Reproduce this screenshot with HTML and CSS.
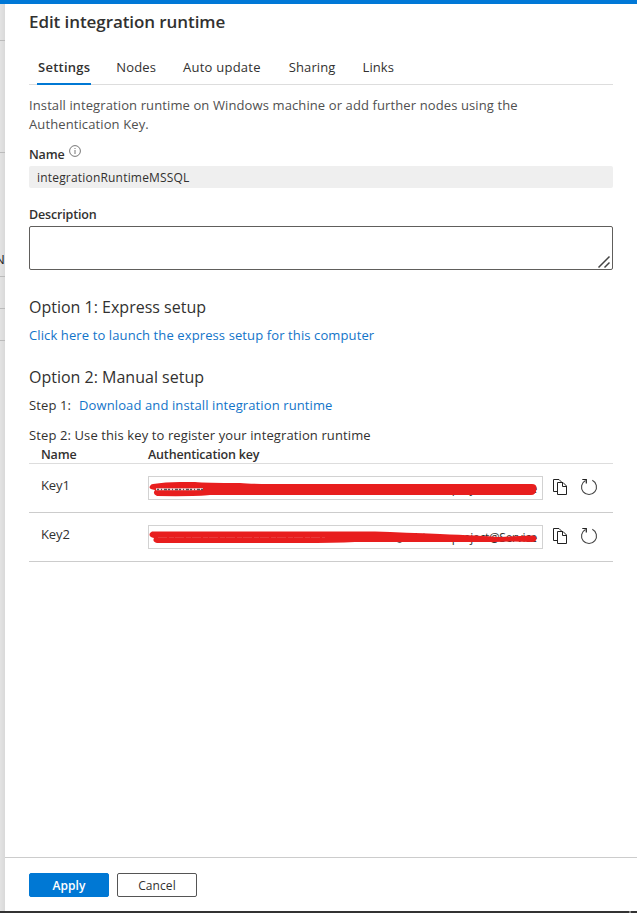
FILE: index.html
```html
<!DOCTYPE html>
<html lang="en">
<head>
<meta charset="utf-8">
<title>Edit integration runtime</title>
<link rel="stylesheet" href="styles.css">
</head>
<body>
<svg class="defs" width="0" height="0" aria-hidden="true">
  <symbol id="copy" viewBox="0 0 16 18">
    <path d="M5 13.5H1.5V1.500H7l2.500 2.500M5.500 4.500h5.500l3.500 3.500v8.500h-9zM10.500 4.500v4h4" fill="none" stroke="#222"/>
  </symbol>
  <symbol id="refresh" viewBox="0 0 18 18">
    <path d="M12.300 2.300A7.500 7.500 0 1 1 5.500 2.400" fill="none" stroke="#444" stroke-width="1.100"/>
    <path d="M2.300 1.500h4v4" fill="none" stroke="#222" stroke-width="1.200"/>
  </symbol>
</svg>
<div class="topbar"></div>
<div class="main">
  <aside class="backdrop"><i class="l1"></i><i class="l2"></i><span class="peek">N</span><i class="l3"></i><i class="l4"></i><i class="l5"></i></aside>
  <section class="panel">
    <div class="content">
      <h1>Edit integration runtime</h1>
      <nav class="tabs">
        <a class="tab active">Settings</a><a class="tab">Nodes</a><a class="tab auto">Auto update</a><a class="tab sharing">Sharing</a><a class="tab">Links</a>
      </nav>
      <p class="intro">Install integration runtime on Windows machine or add further nodes using the<br>Authentication Key.</p>
      <div class="label name-label"><span>Name</span>
        <svg width="12" height="12" viewBox="0 0 12 12"><circle cx="6" cy="6" r="5.400" fill="none" stroke="#666" stroke-width=".9"/><path d="M6 5v4M6 3v1" stroke="#777"/></svg>
      </div>
      <div class="name-field">integrationRuntimeMSSQL</div>
      <div class="label desc-label">Description</div>
      <div class="textarea"><svg width="14" height="14" viewBox="0 0 14 14"><path d="M1.500 12.500l11-11M7.500 12.500l5-5" stroke="#444" stroke-width="1.500"/></svg></div>
      <h2 class="opt1">Option 1: Express setup</h2>
      <p class="row express"><a>Click here to launch the express setup for this computer</a></p>
      <h2 class="opt2">Option 2: Manual setup</h2>
      <p class="row step1"><span>Step 1:</span><a>Download and install integration runtime</a></p>
      <p class="row step2">Step 2: Use this key to register your integration runtime</p>
      <div class="label thead"><span class="th-name">Name</span><span>Authentication key</span></div>
      <div class="key-row">
        <span class="key-name">Key1</span>
        <div class="key-field"><span class="key-text">project@Service</span>
          <svg class="mark" width="393" height="22" viewBox="149 477 393 22"><path d="M153 484Q165 482 180 482H195Q205 483 240 483Q250 484 270 484H532Q537 484 536.500 489Q536 495 531 495H210Q198 496.500 157 496Q152 494 155 490Q148 489 150 486Q151 484 153 484Z" fill="#e81e1e"/><path d="M156 489.300H194L203 489" fill="none" stroke="#f6dada" stroke-width="2"/><path d="M157 489.500H203" fill="none" stroke="#555" stroke-width="1.300" stroke-dasharray="2 2 1 2 3 1"/></svg>
        </div>
        <svg class="ico copy"><use href="#copy"/></svg><svg class="ico refresh"><use href="#refresh"/></svg>
      </div>
      <div class="key-row">
        <span class="key-name">Key2</span>
        <div class="key-field"><span class="key-text">project@Service</span>
          <svg class="mark" width="393" height="22" viewBox="149 526 393 22"><path d="M411 533.500h3M415 533.500h2M424 533.500v2M434 534v2M397 541.500q3 2 5 0" fill="none" stroke="#333"/><path d="M152 531.500H375Q405 532.500 440 534Q480 535.500 500 537Q515 536 532 535.500Q537 535.500 536.500 539Q536 542 532 542Q510 541 495 542Q470 542 440 542H355Q335 543 300 543H157Q152 542 154 538Q148 537 150 533Z" fill="#e81e1e"/><path d="M158 537.500H325" fill="none" stroke="#e84e4e" stroke-width=".6" stroke-dasharray="9 2 5 1"/></svg>
        </div>
        <svg class="ico copy"><use href="#copy"/></svg><svg class="ico refresh"><use href="#refresh"/></svg>
      </div>
    </div>
    <footer><button class="apply">Apply</button><button class="cancel">Cancel</button></footer>
  </section>
</div>
<div class="bottombar"><i></i></div>
</body>
</html>
```
FILE: styles.css
```css
* { box-sizing: border-box; }
body { margin: 0; width: 637px; height: 913px; overflow: hidden; display: flex; flex-direction: column; background: #fff; color: #323130; font: 13px/19px "Open Sans", "Noto Sans", sans-serif; letter-spacing: .11px; }
h1, h2, p { margin: 0; }
.defs { position: absolute; }
.topbar { height: 4px; background: #0078d7; }
.main { flex: 1; display: flex; min-height: 0; }
.bottombar { height: 2px; background: #333; display: flex; justify-content: flex-end; }
.bottombar i { width: 2px; margin-right: 6px; background: #888; }
.backdrop { width: 5px; background: linear-gradient(90deg, #e3e3e3, #d9d9d9); display: flex; flex-direction: column; overflow: hidden; }
.backdrop i { height: 1px; flex: none; background: #bbb; }
.l1 { margin-top: 36px; }
.l2 { margin-top: 111px; }
.peek { margin: 96px 0 0 -5px; height: 20px; line-height: 20px; font-size: 13px; color: #222; }
.backdrop .l3 { margin-top: 7px; }
.l4, .l5 { margin-top: 31px; }
.panel { flex: 1; display: flex; flex-direction: column; min-width: 0; }
.content { flex: 1; padding: 0 24px; }
h1 { height: 36px; line-height: 35px; font-size: 17px; font-weight: 600; letter-spacing: -.08px; }
.tabs { height: 45px; border-bottom: 1px solid #ddd; display: flex; gap: 24px; padding: 8px 8px 0; }
.tab { height: 37px; line-height: 39px; white-space: nowrap; padding: 0 1px; }
.tab.active { font-weight: 600; border-bottom: 2px solid #0078d4; letter-spacing: .25px; }
.tab.auto { letter-spacing: .25px; margin: 0 2px 0 1px; }
.tab.sharing { margin-right: 1px; }
.intro { margin-top: 11px; height: 38px; color: #505050; white-space: nowrap; }
.label { font-size: 12.5px; font-weight: 600; letter-spacing: -.17px; }
.name-label { margin-top: 11px; height: 21px; display: flex; gap: 4px; }
.name-field { height: 22px; border-radius: 2px; background: #efefef; line-height: 23px; padding-left: 8px; font-size: 12px; letter-spacing: .19px; }
.desc-label { margin-top: 17px; height: 21px; }
.textarea { height: 44px; border: 1px solid #605e5c; border-radius: 2px; display: flex; justify-content: flex-end; align-items: flex-end; padding-right: 1px; }
h2 { height: 24px; line-height: 24px; font-size: 16px; font-weight: 400; letter-spacing: 0; }
.opt1 { margin-top: 25px; }
.opt2 { margin-top: 20px; }
.row { height: 20px; line-height: 20px; white-space: nowrap; }
.express, .step1 { margin-top: 6px; }
.step1 { display: flex; gap: 8px; }
.step2 { margin-top: 10px; }
a:not(.tab) { color: #1274c9; }
.thead { height: 19px; line-height: 19px; display: flex; padding-left: 12px; border-bottom: 1px solid #ddd; }
.th-name { width: 107px; }
.key-row { height: 49px; border-bottom: 1px solid #ccc; display: flex; align-items: center; padding-left: 12px; }
.key-name { width: 107px; padding-bottom: 6px; letter-spacing: -.1px; }
.key-field { width: 395px; height: 24px; border: 1px solid #d2d2d2; position: relative; display: flex; justify-content: flex-end; padding-right: 5px; font-size: 12px; line-height: 23px; letter-spacing: -.3px; }
.mark { position: absolute; inset: 0; }
.ico { flex: none; margin-bottom: 2px; }
.copy { width: 16px; height: 18px; margin-left: 9px; }
.refresh { width: 18px; height: 18px; margin-left: 12px; }
footer { height: 54px; border-top: 1px solid #ccc; padding: 15px 24px; display: flex; gap: 8px; }
button { width: 80px; height: 24px; border-radius: 2px; border: 1px solid #555; padding: 1px 0 0; font: 12px/21px "Open Sans", sans-serif; letter-spacing: .1px; background: #fff; color: #323130; }
.apply { background: #0078d4; border-color: #0078d4; color: #fff; font-weight: 600; }
```
